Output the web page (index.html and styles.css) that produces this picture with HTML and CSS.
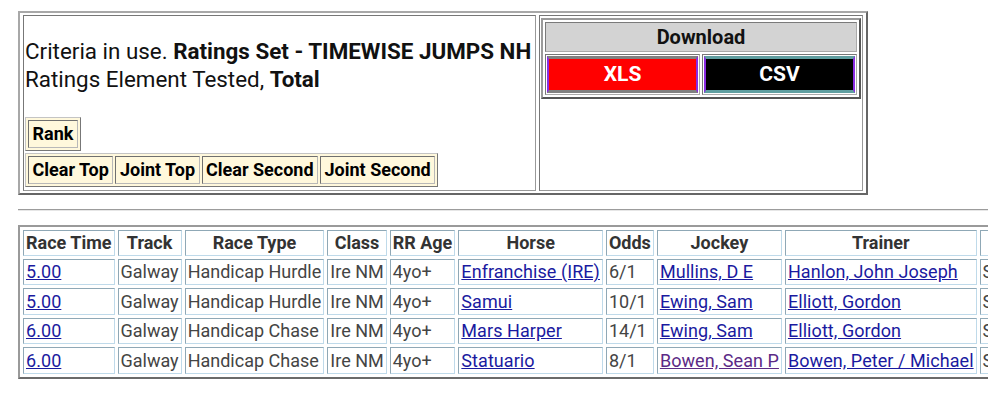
FILE: index.html
```html
<!DOCTYPE html>
<html lang="en">
<head>
<meta charset="utf-8">
<title>Ratings Results</title>
<link rel="stylesheet" href="styles.css">
</head>
<body>
<div class="page">
  <table class="top">
    <tr>
      <td class="crit">
        <p class="crit-text">Criteria in use. <b>Ratings Set - TIMEWISE JUMPS NH</b><br>Ratings Element Tested, <b>Total</b></p>
        <table class="btns rank">
          <tr><td>Rank</td></tr>
        </table>
        <table class="btns">
          <tr><td>Clear Top</td><td>Joint Top</td><td>Clear Second</td><td>Joint Second</td></tr>
        </table>
      </td>
      <td class="dl-cell">
        <table class="dl">
          <tr><th colspan="2">Download</th></tr>
          <tr>
            <td><a class="dlbtn xls" href="#">XLS</a></td>
            <td><a class="dlbtn csv" href="#">CSV</a></td>
          </tr>
        </table>
      </td>
    </tr>
  </table>
  <hr class="rule">
  <table class="results">
    <tr>
      <th>Race Time</th><th>Track</th><th>Race Type</th><th>Class</th><th>RR Age</th><th>Horse</th><th>Odds</th><th>Jockey</th><th>Trainer</th><th>Status</th>
    </tr>
    <tr>
      <td><a href="#">5.00</a></td><td>Galway</td><td>Handicap Hurdle</td><td>Ire NM</td><td>4yo+</td><td><a href="#">Enfranchise (IRE)</a></td><td>6/1</td><td><a href="#">Mullins, D E</a></td><td><a href="#">Hanlon, John Joseph</a></td><td>Selected</td>
    </tr>
    <tr>
      <td><a href="#">5.00</a></td><td>Galway</td><td>Handicap Hurdle</td><td>Ire NM</td><td>4yo+</td><td><a href="#">Samui</a></td><td>10/1</td><td><a href="#">Ewing, Sam</a></td><td><a href="#">Elliott, Gordon</a></td><td>Selected</td>
    </tr>
    <tr>
      <td><a href="#">6.00</a></td><td>Galway</td><td>Handicap Chase</td><td>Ire NM</td><td>4yo+</td><td><a href="#">Mars Harper</a></td><td>14/1</td><td><a href="#">Ewing, Sam</a></td><td><a href="#">Elliott, Gordon</a></td><td>Selected</td>
    </tr>
    <tr>
      <td><a href="#">6.00</a></td><td>Galway</td><td>Handicap Chase</td><td>Ire NM</td><td>4yo+</td><td><a href="#">Statuario</a></td><td>8/1</td><td><a class="visited" href="#">Bowen, Sean P</a></td><td><a href="#">Bowen, Peter / Michael</a></td><td>Selected</td>
    </tr>
  </table>
</div>
</body>
</html>
```
FILE: styles.css
```css
html {
  overflow: hidden;
  background: #fff;
}
body {
  margin: 0;
  font-family: "Roboto", "Liberation Sans", sans-serif;
  color: #111;
}
.page {
  width: max-content;
  padding: 11px 0 0 18px;
}

/* top panel */
.top {
  width: 850px;
  border-style: solid;
  border-width: 2px;
  border-color: #a8a8a8 #666 #666 #a8a8a8;
  border-spacing: 3px 2px;
}
.top > tbody > tr > td {
  border: 1px solid;
  border-color: #777 #999 #999 #777;
  padding: 1px;
}
.crit {
  vertical-align: top;
}
.crit-text {
  margin: 20px 0 24px;
  font-size: 22.4px;
  line-height: 28px;
}
.crit-text b {
  font-weight: 700;
}
.btns {
  border-style: solid;
  border-width: 1px;
  border-color: #c4c4c4 #777 #777 #c4c4c4;
  border-spacing: 2.5px 2px;
  background: #fff8dc;
  margin-bottom: 2px;
}
.rank {
  border-spacing: 2px;
}
.btns td {
  border: 1px solid;
  border-color: #6f6f6f #b8b8b8 #b8b8b8 #6f6f6f;
  padding: 2px 3.5px;
  font-size: 18px;
  line-height: 22px;
  font-weight: 700;
  background: #fff8dc;
  color: #000;
}
.dl-cell {
  width: 324px;
  box-sizing: border-box;
  vertical-align: top;
}
.dl {
  width: 100%;
  border-style: solid;
  border-width: 2px;
  border-color: #9a9a9a #555 #555 #9a9a9a;
  border-spacing: 2px;
  margin-top: 1px;
}
.dl th {
  background: #d3d3d3;
  border: 1px solid;
  border-color: #7a7a7a #aaa #aaa #7a7a7a;
  padding: 2px;
  font-size: 20px;
  line-height: 24px;
  font-weight: 700;
  color: #111;
}
.dl td {
  width: 50%;
  border: 1px solid;
  border-color: #777 #aaa #aaa #777;
  padding: 1px;
}
.dlbtn {
  display: block;
  border-style: solid;
  border-width: 3px 2px;
  padding: 3px 0 4px;
  text-align: center;
  font-size: 21px;
  line-height: 24px;
  font-weight: 700;
  color: #fff;
  text-decoration: none;
}
.xls {
  background: #ff0000;
  border-color: #808080 #8a2be2;
}
.csv {
  background: #000;
  border-color: #5f9ea0 #8a2be2;
}

/* rule */
.rule {
  margin: 14px 0;
  border: 0;
  border-top: 1px solid #9c9c9c;
  border-bottom: 1px solid #e6e6e6;
  height: 0;
}

/* results */
.results {
  border-style: solid;
  border-width: 2px;
  border-color: #9a9a9a #6a6a6a #6a6a6a #9a9a9a;
  border-spacing: 3px;
  font-size: 18px;
}
.results th,
.results td {
  border: 1px solid;
  border-color: #8fa8b6 #bfdaea #bfdaea #8fa8b6;
  padding: 1.75px 2px;
  white-space: nowrap;
}
.results th {
  font-weight: 700;
  color: #333;
  text-align: center;
  line-height: 20px;
}
.results td {
  color: #444;
  text-align: left;
}
.results a {
  color: #1a1aa0;
  letter-spacing: 0.06px;
}
.results a.visited {
  color: #5c2a86;
}
```
